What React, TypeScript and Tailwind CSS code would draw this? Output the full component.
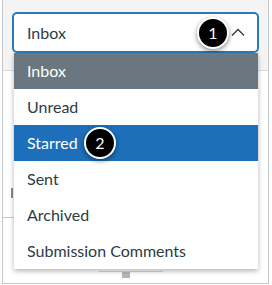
import React from "react";

const items = ["Inbox", "Unread", "Starred", "Sent", "Archived", "Submission Comments"];

const Badge: React.FC<{ n: number; className?: string }> = ({ n, className }) => (
  <div
    className={`absolute w-[32px] h-[32px] rounded-full bg-black border-2 border-white shadow-[0_2px_5px_rgba(0,0,0,0.45)] flex items-center justify-center text-white text-[16px] leading-none ${className ?? ""}`}
  >
    {n}
  </div>
);

export default function App() {
  return (
    <div
      className="w-[272px] h-[285px] bg-white relative overflow-hidden text-[#2d3b45]"
      style={{ fontFamily: "Lato, 'Liberation Sans', sans-serif" }}
    >
      <div className="pl-[2px] pr-[3px] pb-[1px] h-full">
        <div className="h-full border-l border-r border-b border-[#c4c8cb] flex flex-col">
          {/* header strip */}
          <div className="h-[71px] bg-[#f4f4f4] border-b border-[#dcdcdc] pt-[12px] pl-[9px]">
            <div className="relative w-[247px] h-[41px] border-2 border-[#2a7ab8] rounded-[5px] bg-white flex items-center pl-[13px] pr-[12px]">
              <span className="text-[16px]">Inbox</span>
              <svg
                className="ml-auto"
                width="14"
                height="9"
                viewBox="0 0 14 9"
                fill="none"
                stroke="#2d3b45"
                strokeWidth="1.3"
              >
                <path d="M1 7.5L7 1.5L13 7.5" />
              </svg>
              <Badge n={1} className="left-[183px] top-[3px]" />
            </div>
          </div>

          {/* faint page content peeking out behind the menu */}
          <div className="flex-1 flex flex-col">
            <div className="mt-[117px] ml-[8px] w-[2px] h-[10px] bg-[#8a8f93]" />
            <div className="mt-[19px] w-[12px] h-px bg-[#c4c8cb]" />
            <div className="mt-auto mb-[5px] ml-[96px] flex flex-col">
              <div className="w-[64px] h-px bg-[#d5d5d5]" />
              <div className="ml-[23px] w-[8px] h-[6px] bg-[#b5b5b5]" />
            </div>
          </div>
        </div>
      </div>

      {/* dropdown menu */}
      <ul className="absolute left-[14px] top-[53px] w-[244px] bg-white shadow-[0_2px_5px_rgba(0,0,0,0.3)]">
        {items.map((it) => (
          <li
            key={it}
            className={`relative h-[36px] flex items-center pl-[13px] text-[16px] ${
              it === "Inbox"
                ? "bg-[#6b7780] text-white"
                : it === "Starred"
                ? "bg-[#1c6fb8] text-white"
                : ""
            }`}
          >
            {it}
            {it === "Starred" && <Badge n={2} className="left-[70px] top-[2px]" />}
          </li>
        ))}
      </ul>
    </div>
  );
}
